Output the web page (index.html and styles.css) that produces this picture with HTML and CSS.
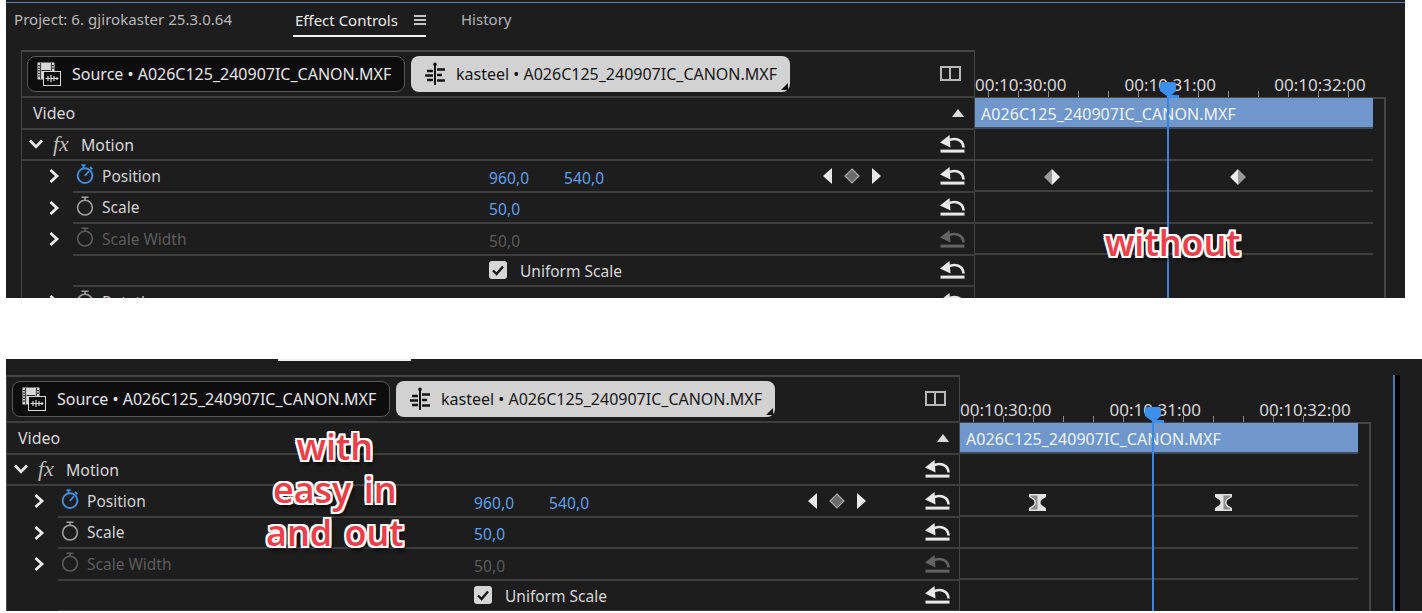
FILE: index.html
```html
<!DOCTYPE html>
<html lang="en">
<head>
<meta charset="utf-8">
<title>Effect Controls keyframes: without and with easy in and out</title>
<link rel="stylesheet" href="styles.css">
</head>
<body>
<svg class="defs" aria-hidden="true">
  <symbol id="reset" viewBox="0 0 25 18">
    <path d="M0 7.5 L9.5 0 L10.5 12.5 Z" fill="currentColor"/>
    <path d="M8 5.6 C15 2 23 4.5 23.6 12.5" fill="none" stroke="currentColor" stroke-width="2.6"/>
    <rect x="0.5" y="14.6" width="24" height="3" fill="currentColor"/>
  </symbol>
  <symbol id="watch" viewBox="0 0 18 20">
    <circle cx="9" cy="11.6" r="7.4" fill="none" stroke="currentColor" stroke-width="1.6"/>
    <path d="M5.5 1.2 H12.5 M9 1.2 V4.4" fill="none" stroke="currentColor" stroke-width="1.6"/>
  </symbol>
  <symbol id="watchon" viewBox="0 0 18 20">
    <circle cx="9" cy="11.6" r="7.4" fill="none" stroke="currentColor" stroke-width="1.9"/>
    <path d="M5.5 1.2 H9.5 M7.5 1.2 V4.4 M14 3 L16.4 5.4 M13 7.2 L8.8 12" fill="none" stroke="currentColor" stroke-width="1.8"/>
  </symbol>
  <symbol id="right" viewBox="0 0 12 16"><path d="M2.5 2 L9 8 L2.5 14" fill="none" stroke="currentColor" stroke-width="2.8"/></symbol>
  <symbol id="down" viewBox="0 0 16 12"><path d="M2 2.5 L8 8.8 L14 2.5" fill="none" stroke="currentColor" stroke-width="2.8"/></symbol>
  <symbol id="source" viewBox="0 0 24 24">
    <rect x="0.5" y="0.5" width="17" height="17" fill="#d8d8d8"/>
    <path d="M3.6 1 V17 M14.4 1 V17" stroke="#0e0e0e" stroke-width="0.8"/>
    <path d="M1 3.6 H3 M1 6.2 H3 M1 8.8 H3 M1 11.4 H3 M1 14 H3 M15 3.6 H17 M15 6.2 H17" stroke="#0e0e0e" stroke-width="1"/>
    <path d="M4.6 8.6 H13.4" stroke="#0e0e0e" stroke-width="1"/>
    <rect x="6.5" y="9.5" width="17" height="14" fill="#0e0e0e" stroke="#d8d8d8"/>
    <path d="M8.5 16.5 H21.5 M11 14 V19 M14 13 V20 M17 14 V19 M20 15 V18" stroke="#d8d8d8" stroke-width="1.2"/>
  </symbol>
  <symbol id="seq" viewBox="0 0 22 24">
    <path d="M11 4 V23" stroke="#141414" stroke-width="2"/>
    <circle cx="11" cy="2.4" r="1.8" fill="#141414"/>
    <path d="M3 9 H9 M13 7.5 H21 M1 13.5 H9 M13 13 H18 M3 18 H9 M13 18.5 H21" stroke="#141414" stroke-width="2.4"/>
  </symbol>
  <symbol id="dia1" viewBox="0 0 16 16"><path d="M8 0 L16 8 L8 16 Z" fill="#ececec"/><path d="M8 0 L0 8 L8 16 Z" fill="#999"/></symbol>
  <symbol id="dia2" viewBox="0 0 16 16"><path d="M8 0 L16 8 L8 16 Z" fill="#999"/><path d="M8 0 L0 8 L8 16 Z" fill="#ececec"/></symbol>
  <symbol id="ease1" viewBox="0 0 17 17">
    <path d="M0 0 H17 V3 C13.5 5 11.5 6.5 11.5 8.5 C11.5 10.5 13.5 12 17 14 V17 H0 V14 C3.5 12 5.5 10.5 5.5 8.5 C5.5 6.5 3.5 5 0 3 Z" fill="#e2e2e2"/>
    <path d="M1.6 1.5 H8.5 V15.5 H1.6 V14.6 C5 12.6 7 11 7 8.5 C7 6 5 4.4 1.6 2.4 Z" fill="#8c8c8c"/>
  </symbol>
  <symbol id="ease2" viewBox="0 0 17 17">
    <path d="M0 0 H17 V3 C13.5 5 11.5 6.5 11.5 8.5 C11.5 10.5 13.5 12 17 14 V17 H0 V14 C3.5 12 5.5 10.5 5.5 8.5 C5.5 6.5 3.5 5 0 3 Z" fill="#e2e2e2"/>
    <path d="M15.4 1.5 H8.5 V15.5 H15.4 V14.6 C12 12.6 10 11 10 8.5 C10 6 12 4.4 15.4 2.4 Z" fill="#8c8c8c"/>
  </symbol>
  <symbol id="head" viewBox="0 0 20 17">
    <path d="M3 0 H15 Q17 0 17 2 V9 L11 14.5 H8.5 L1 9 V2 Q1 0 3 0 Z" fill="#3d8fee"/>
    <rect x="8" y="13" width="12" height="3" fill="#3d8fee"/>
  </symbol>
</svg>

<section class="panel panel-top">
  <header class="tabbar">
    <span class="project">Project: 6. gjirokaster 25.3.0.64</span>
    <span class="tab-active">
      <span class="tab-name">Effect Controls</span>
      <span class="burger"></span>
    </span>
    <span class="history">History</span>
  </header>
  <div class="work">
    <div class="controls">
      <div class="head">
        <div class="chip chip-dark"><svg class="chip-icon"><use href="#source"/></svg>Source • A026C125_240907IC_CANON.MXF</div>
        <div class="chip chip-light"><svg class="chip-icon seq"><use href="#seq"/></svg>kasteel • A026C125_240907IC_CANON.MXF</div>
        <span class="toggle"></span>
      </div>
      <div class="row row-full"><span class="video">Video</span><span class="up"></span></div>
      <div class="row row-full">
        <svg class="twist-down"><use href="#down"/></svg><i class="fx">fx</i><span class="motion">Motion</span>
        <svg class="reset reset-push"><use href="#reset"/></svg>
      </div>
      <div class="prop">
        <svg class="twist"><use href="#right"/></svg>
        <div class="prop-main prop-last-full">
          <svg class="watch watch-on"><use href="#watchon"/></svg><span class="name">Position</span><span class="val">960,0</span><span class="val2">540,0</span>
          <span class="nav"><span class="tri-l"></span><svg class="navdia" viewBox="0 0 16 16"><path d="M8 1 L15 8 L8 15 L1 8 Z" fill="#6a6a6a" stroke="#a8a8a8" stroke-width="1.2"/></svg><span class="tri-r"></span></span>
          <svg class="reset"><use href="#reset"/></svg>
        </div>
      </div>
      <div class="prop">
        <svg class="twist"><use href="#right"/></svg>
        <div class="prop-main">
          <svg class="watch"><use href="#watch"/></svg><span class="name">Scale</span><span class="val">50,0</span><span class="val2"></span><span class="nav"></span>
          <svg class="reset"><use href="#reset"/></svg>
        </div>
      </div>
      <div class="prop">
        <svg class="twist"><use href="#right"/></svg>
        <div class="prop-main dim">
          <svg class="watch"><use href="#watch"/></svg><span class="name">Scale Width</span><span class="val">50,0</span><span class="val2"></span><span class="nav"></span>
          <svg class="reset"><use href="#reset"/></svg>
        </div>
      </div>
      <div class="prop">
        <span class="twist"></span>
        <div class="prop-main">
          <span class="watch"></span><span class="name"></span>
          <span class="uniform"><span class="check"><svg viewBox="0 0 18 18"><path d="M4 9.5 L7.6 13 L14 5.5" fill="none" stroke="#141414" stroke-width="2.4"/></svg></span><span class="uniform-label">Uniform Scale</span></span>
          <svg class="reset"><use href="#reset"/></svg>
        </div>
      </div>
      <div class="prop">
        <svg class="twist"><use href="#right"/></svg>
        <div class="prop-main">
          <svg class="watch"><use href="#watch"/></svg><span class="name">Rotation</span><span class="val"></span><span class="val2"></span><span class="nav"></span>
          <svg class="reset"><use href="#reset"/></svg>
        </div>
      </div>
    </div>
    <div class="timeline">
      <div class="ruler">
        <div class="codes"><span>00:10:30:00</span><span>00:10:31:00</span><span>00:10:32:00</span></div>
        <div class="ticks"></div>
      </div>
      <div class="track">
        <div class="clip">A026C125_240907IC_CANON.MXF</div>
        <div class="lane"></div>
        <div class="lane lane-keys"><svg class="key key-a"><use href="#dia1"/></svg><svg class="key key-b"><use href="#dia2"/></svg></div>
        <div class="lane"></div>
        <div class="lane"></div>
      </div>
      <span class="line"></span>
      <svg class="playhead"><use href="#head"/></svg>
    </div>
    <div class="note note-without">without</div>
  </div>
</section>

<section class="panel panel-bottom">
  <div class="strip"><span class="strip-line"></span></div>
  <div class="panel-body">
  <div class="work">
    <div class="controls">
      <div class="head">
        <div class="chip chip-dark"><svg class="chip-icon"><use href="#source"/></svg>Source • A026C125_240907IC_CANON.MXF</div>
        <div class="chip chip-light"><svg class="chip-icon seq"><use href="#seq"/></svg>kasteel • A026C125_240907IC_CANON.MXF</div>
        <span class="toggle"></span>
      </div>
      <div class="row row-full"><span class="video">Video</span><span class="up"></span></div>
      <div class="row row-full">
        <svg class="twist-down"><use href="#down"/></svg><i class="fx">fx</i><span class="motion">Motion</span>
        <svg class="reset reset-push"><use href="#reset"/></svg>
      </div>
      <div class="prop">
        <svg class="twist"><use href="#right"/></svg>
        <div class="prop-main prop-last-full">
          <svg class="watch watch-on"><use href="#watchon"/></svg><span class="name">Position</span><span class="val">960,0</span><span class="val2">540,0</span>
          <span class="nav"><span class="tri-l"></span><svg class="navdia" viewBox="0 0 16 16"><path d="M8 1 L15 8 L8 15 L1 8 Z" fill="#6a6a6a" stroke="#a8a8a8" stroke-width="1.2"/></svg><span class="tri-r"></span></span>
          <svg class="reset"><use href="#reset"/></svg>
        </div>
      </div>
      <div class="prop">
        <svg class="twist"><use href="#right"/></svg>
        <div class="prop-main">
          <svg class="watch"><use href="#watch"/></svg><span class="name">Scale</span><span class="val">50,0</span><span class="val2"></span><span class="nav"></span>
          <svg class="reset"><use href="#reset"/></svg>
        </div>
      </div>
      <div class="prop">
        <svg class="twist"><use href="#right"/></svg>
        <div class="prop-main dim">
          <svg class="watch"><use href="#watch"/></svg><span class="name">Scale Width</span><span class="val">50,0</span><span class="val2"></span><span class="nav"></span>
          <svg class="reset"><use href="#reset"/></svg>
        </div>
      </div>
      <div class="prop">
        <span class="twist"></span>
        <div class="prop-main">
          <span class="watch"></span><span class="name"></span>
          <span class="uniform"><span class="check"><svg viewBox="0 0 18 18"><path d="M4 9.5 L7.6 13 L14 5.5" fill="none" stroke="#141414" stroke-width="2.4"/></svg></span><span class="uniform-label">Uniform Scale</span></span>
          <svg class="reset"><use href="#reset"/></svg>
        </div>
      </div>
    </div>
    <div class="timeline">
      <div class="ruler">
        <div class="codes"><span>00:10:30:00</span><span>00:10:31:00</span><span>00:10:32:00</span></div>
        <div class="ticks"></div>
      </div>
      <div class="track">
        <div class="clip">A026C125_240907IC_CANON.MXF</div>
        <div class="lane"></div>
        <div class="lane lane-keys"><svg class="key key-a ease"><use href="#ease1"/></svg><svg class="key key-b ease"><use href="#ease2"/></svg></div>
        <div class="lane"></div>
        <div class="lane"></div>
      </div>
      <span class="line"></span>
      <svg class="playhead"><use href="#head"/></svg>
    </div>
    <div class="note note-with">with<br>easy in<br>and out</div>
  </div>
  <div class="sep"></div>
  </div>
</section>
</body>
</html>
```
FILE: styles.css
```css
* { box-sizing: border-box; }
html, body { margin: 0; height: 613px; overflow: hidden; background: #fff; }
body { font-family: "Noto Sans", sans-serif; font-size: 15px; color: #c8c8c8; }
.defs { position: absolute; width: 0; height: 0; }

.panel { background: #1d1d1d; overflow: hidden; }
.panel-top { margin-left: 6px; width: 1399px; height: 298px; padding-top: 2px; }
.panel-bottom { margin: 61px 0 0 6px; width: 1416px; height: 252px; }

.tabbar { height: 34px; display: flex; align-items: center; border-top: 1px solid #5a83bb; padding: 0 0 2px 8px; margin-bottom: 14px; }
.project { width: 279px; color: #b9b9b9; letter-spacing: 0.05px; white-space: nowrap; }
.tab-active { align-self: stretch; width: 133px; display: flex; align-items: center; padding: 2px 0 0 2px; gap: 16px; border-bottom: 2px solid #f2f2f2; margin-bottom: -3px; color: #ececec; white-space: nowrap; }
.burger { width: 12px; height: 10px; border-top: 2px solid #c4c4c4; border-bottom: 2px solid #c4c4c4; position: relative; }
.burger::after { content: ""; position: absolute; left: 0; right: 0; top: 2px; height: 2px; background: #c4c4c4; }
.history { margin-left: 35px; color: #b4b4b4; }

.strip { height: 16px; }
.strip-line { display: block; width: 133px; height: 2px; margin-left: 272px; background: #f2f2f2; }
.panel-body { display: flex; }
.sep { width: 7px; margin-left: 22px; height: 236px; background: #000; border-left: 2px solid #4e78ad; }

.work { position: relative; display: flex; width: 1365px; flex: none; }
.panel-top .work { margin-left: 15px; }

.controls { width: 954px; flex: none; border: 1px solid #464646; border-width: 2px 0 0 1px; }
.head { display: flex; align-items: center; gap: 6px; padding: 0 0 0 5px; border-bottom: 2px solid #3e3e3e; margin-top: -1px; height: 47px; border-right: 1px solid #464646; }
.chip { height: 36px; width: 378px; display: flex; align-items: center; border-radius: 8px; font-size: 16px; white-space: nowrap; position: relative; }
.chip-dark { background: #0d0d0d; border: 1px solid #585858; color: #e6e6e6; padding-left: 9px; }
.chip-light { background: #d2d2d2; color: #161616; width: 379px; padding-left: 13px; }
.chip-light::after { content: ""; position: absolute; right: 2px; bottom: 2px; border-style: solid; border-width: 0 0 7px 7px; border-color: transparent transparent #111 transparent; }
.chip-icon { width: 24px; height: 24px; margin-right: 11px; flex: none; }
.seq { width: 22px; margin-right: 10px; }
.toggle { width: 21px; height: 15px; margin-left: 144px; border: 2px solid #b8b8b8; background: linear-gradient(#b8b8b8, #b8b8b8) 7px 0 / 2px 100% no-repeat; }

.row { height: 31.5px; display: flex; align-items: center; border-bottom: 2px solid #3e3e3e; border-right: 1px solid #464646; }
.video { padding-left: 11px; color: #d8d8d8; font-size: 16px; }
.up { margin-left: auto; margin-right: 10px; border-style: solid; border-width: 0 6px 8px 6px; border-color: transparent transparent #dcdcdc transparent; }
.twist-down { width: 16px; height: 12px; margin-left: 6px; color: #e4e4e4; }
.fx { font-family: "Liberation Serif", serif; font-size: 22px; margin-left: 9px; width: 20px; color: #bdbdbd; }
.motion { margin-left: 8px; padding-top: 2px; color: #d8d8d8; font-size: 15.8px; }
.reset { width: 25px; height: 18px; flex: none; color: #e8e8e8; }
.reset-push { margin-left: auto; margin-right: 9px; }

.prop { height: 31.5px; display: flex; }
.twist { width: 12px; height: 16px; margin: 7px 13px 0 26px; flex: none; color: #ececec; }
span.twist { height: 1px; }
.prop-main { flex: 1; display: flex; align-items: center; border-bottom: 2px solid #3e3e3e; border-right: 1px solid #464646; }
.watch { width: 18px; height: 20px; flex: none; margin: 0 5px 3px 3px; color: #a0a0a0; }
span.watch { height: 1px; }
.watch-on { color: #3f8fe2; }
.name { width: 387px; flex: none; color: #d2d2d2; margin-left: 3px; font-size: 15.5px; }
.val { width: 75px; flex: none; color: #5da2ec; font-size: 15.5px; letter-spacing: 0.1px; padding-top: 4px; }
.val2 { width: 259px; flex: none; color: #5da2ec; font-size: 15.5px; letter-spacing: 0.1px; padding-top: 4px; }
.nav { width: 58px; flex: none; display: flex; align-items: center; justify-content: space-between; }
.tri-l { border-style: solid; border-width: 8px 9px 8px 0; border-color: transparent #eaeaea transparent transparent; }
.tri-r { border-style: solid; border-width: 8px 0 8px 9px; border-color: transparent transparent transparent #eaeaea; }
.navdia { width: 16px; height: 16px; }
.prop-main > .reset { margin-left: 59px; }
.uniform { width: 392px; flex: none; display: flex; align-items: center; color: #d8d8d8; font-size: 15.5px; }
.uniform-label { padding-top: 2px; }
.check { width: 18px; height: 18px; margin-right: 13px; border-radius: 3px; background: #d6d6d6; display: flex; }
.uniform + .reset { margin-left: 59px; }
.dim .name, .dim .val { color: #5c5c5c; }
.dim .watch { color: #5c5c5c; }
.dim .reset { color: #636363; }

.timeline { position: relative; flex: 1; min-width: 0; }
.ruler { height: 47px; position: relative; }
.codes { display: flex; padding-top: 24px; font-size: 17px; line-height: 22px; color: #d6d6d6; white-space: nowrap; }
.codes span { width: 149.6px; flex: none; }
.ticks { position: absolute; left: 0; right: 13px; bottom: 0; height: 6px; background: repeating-linear-gradient(90deg, transparent 0 13px, #8a8a8a 13px 14px, transparent 14px 30px); }
.track { border-top: 2px solid #464646; border-right: 2px solid #464646; height: 300px; padding-right: 11px; }
.clip { height: 31px; margin-top: -1px; background: #6f97cb; color: #f0f4fa; padding: 2px 0 0 6px; line-height: 29px; font-size: 16px; letter-spacing: 0.05px; border-bottom: 2px solid #3d4a5f; }
.lane { height: 31.5px; border-bottom: 2px solid #3e3e3e; position: relative; }
.key { position: absolute; left: 69px; top: 8px; width: 16px; height: 16px; }
.key-b { left: 255px; }
.ease { width: 17px; height: 17px; left: 69px; }
.ease.key-b { left: 255px; }
.line { position: absolute; left: 192px; top: 44px; bottom: 0; width: 2px; background: #3a86dc; height: 300px; }
.playhead { position: absolute; left: 184px; top: 32px; width: 20px; height: 17px; }

.note { position: absolute; font-family: "Open Sans", sans-serif; font-weight: 600; font-size: 36px; line-height: 43px; text-align: center; word-spacing: 3px; color: #ef3e4a; text-shadow: -2px 0 #fff, 2px 0 #fff, 0 -2px #fff, 0 2px #fff, -2px -2px #fff, 2px 2px #fff, -2px 2px #fff, 2px -2px #fff, 2px 4px 4px #000; }
.note-without { left: 1084px; top: 171px; }
.note-with { left: 260px; top: 50px; }
```
